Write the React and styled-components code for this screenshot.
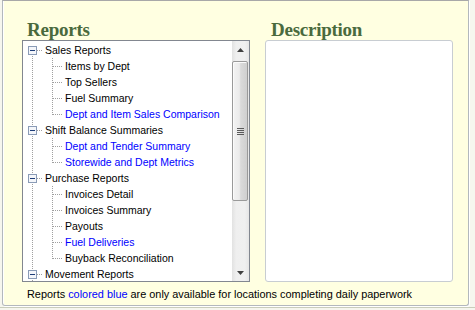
import React from "react";
import styled, { createGlobalStyle } from "styled-components";

const Global = createGlobalStyle`
  html, body { margin: 0; padding: 0; }
  body {
    width: 475px;
    height: 310px;
    background: #f6f6ee;
    overflow: hidden;
  }
`;

const Panel = styled.div`
  box-sizing: border-box;
  margin-left: 2px;
  width: 467px;
  height: 306px;
  background: #ffffe1;
  border: 1px solid #b3b8bd;
  border-top: 1px solid #a8a8a8;
  border-radius: 0 0 3px 3px;
  box-shadow: inset 1px 0 0 #ffffff, 1px 1px 0 #ffffff;
  padding: 18px 15px 0 19px;
  display: flex;
  flex-direction: column;
`;

const BottomRule = styled.div`
  margin-top: 1px;
  height: 1px;
  background: #c9cdbb;
`;

const Columns = styled.div`
  display: flex;
  gap: 15px;
`;

const Column = styled.div`
  width: ${(p) => p.$width}px;
  display: flex;
  flex-direction: column;
`;

const Heading = styled.h2`
  margin: 0;
  padding-left: ${(p) => p.$inset}px;
  font-family: "Liberation Serif", "Times New Roman", serif;
  font-weight: bold;
  font-size: 19px;
  line-height: 21px;
  letter-spacing: -0.25px;
  color: #4a6a3d;
`;

const TreeBox = styled.div`
  box-sizing: border-box;
  height: 242px;
  border: 1px solid #828790;
  background: #ffffff;
  display: flex;
  overflow: hidden;
`;

const TreeList = styled.div`
  flex: 1;
  padding-top: 1px;
  overflow: hidden;
`;

const Row = styled.div`
  display: flex;
  height: 16px;
  align-items: flex-start;
`;

const Cell = styled.svg`
  display: block;
  flex: 0 0 20px;
  width: 20px;
  height: 16px;
  shape-rendering: crispEdges;
`;

const Label = styled.span`
  box-sizing: border-box;
  height: 16px;
  padding-top: 1px;
  margin-left: 2px;
  line-height: 15px;
  white-space: nowrap;
  font-family: "Liberation Sans", Arial, sans-serif;
  font-size: 10.5px;
  color: ${(p) => (p.$blue ? "#0000ff" : "#000000")};
`;

const ScrollBar = styled.div`
  flex: 0 0 17px;
  width: 17px;
  display: flex;
  flex-direction: column;
  background: linear-gradient(to right, #e2e2e2, #efefef 25%, #f0f0f0 75%, #e6e6e6);
`;

const ScrollButton = styled.div`
  height: 17px;
  flex: 0 0 17px;
  display: flex;
  align-items: center;
  justify-content: center;
`;

const Track = styled.div`
  flex: 1;
  padding-top: 3px;
`;

const Thumb = styled.div`
  box-sizing: border-box;
  margin: 0 1px 0 0;
  height: 140px;
  border: 1px solid #9a9a9a;
  border-radius: 2px;
  background: linear-gradient(to right, #f3f3f3, #ebebeb 45%, #dadada 55%, #cfcfcf);
  box-shadow: inset 1px 1px 0 #fbfbfb;
  display: flex;
  align-items: center;
  justify-content: center;
`;

const DescBox = styled.div`
  box-sizing: border-box;
  height: 242px;
  border: 1px solid #c8cdd2;
  border-radius: 3px;
  background: #ffffff;
`;

const Footer = styled.p`
  margin: 4px 0 0;
  padding-left: 5px;
  font-family: "Liberation Sans", Arial, sans-serif;
  font-size: 10.9px;
  line-height: 16px;
  color: #000000;
  white-space: nowrap;
`;

const Blue = styled.span`
  color: #0000ff;
`;

const DOT = "#a0a0a0";

function VLine({ from, to }) {
  return (
    <line x1="9.5" y1={from} x2="9.5" y2={to} stroke={DOT} strokeWidth="1" strokeDasharray="1 1" />
  );
}

function HLine({ from }) {
  return (
    <line x1={from} y1="8.5" x2="20" y2="8.5" stroke={DOT} strokeWidth="1" strokeDasharray="1 1" />
  );
}

function ParentCell({ first }) {
  return (
    <Cell viewBox="0 0 20 16">
      {!first && <VLine from={0} to={4} />}
      <VLine from={14} to={16} />
      <HLine from={14} />
      <rect x="5.5" y="4.5" width="8" height="8" fill="#f4f6fa" stroke="#8a9bb6" />
      <line x1="7" y1="8.5" x2="12" y2="8.5" stroke="#1e3d78" strokeWidth="1" />
    </Cell>
  );
}

function PassCell() {
  return (
    <Cell viewBox="0 0 20 16">
      <VLine from={0} to={16} />
    </Cell>
  );
}

function ChildCell({ last }) {
  return (
    <Cell viewBox="0 0 20 16">
      <VLine from={0} to={last ? 9 : 16} />
      <HLine from={10} />
    </Cell>
  );
}

const tree = [
  {
    title: "Sales Reports",
    items: [
      { t: "Items by Dept" },
      { t: "Top Sellers" },
      { t: "Fuel Summary" },
      { t: "Dept and Item Sales Comparison", blue: true },
    ],
  },
  {
    title: "Shift Balance Summaries",
    items: [
      { t: "Dept and Tender Summary", blue: true },
      { t: "Storewide and Dept Metrics", blue: true },
    ],
  },
  {
    title: "Purchase Reports",
    items: [
      { t: "Invoices Detail" },
      { t: "Invoices Summary" },
      { t: "Payouts" },
      { t: "Fuel Deliveries", blue: true },
      { t: "Buyback Reconciliation" },
    ],
  },
  { title: "Movement Reports", items: [] },
];

function ArrowUp() {
  return (
    <svg width="7" height="4" viewBox="0 0 7 4">
      <polygon points="3.5,0 7,4 0,4" fill="#404040" />
    </svg>
  );
}

function ArrowDown() {
  return (
    <svg width="7" height="4" viewBox="0 0 7 4">
      <polygon points="0,0 7,0 3.5,4" fill="#404040" />
    </svg>
  );
}

function Grip() {
  return (
    <svg width="7" height="7" viewBox="0 0 7 7" shapeRendering="crispEdges">
      <line x1="0" y1="0.5" x2="7" y2="0.5" stroke="#5a5a5a" />
      <line x1="0" y1="2.5" x2="7" y2="2.5" stroke="#5a5a5a" />
      <line x1="0" y1="4.5" x2="7" y2="4.5" stroke="#5a5a5a" />
      <line x1="0" y1="6.5" x2="7" y2="6.5" stroke="#5a5a5a" />
    </svg>
  );
}

export default function App() {
  return (
    <>
      <Global />
      <Panel>
        <Columns>
          <Column $width={228}>
            <Heading $inset={5}>Reports</Heading>
            <TreeBox>
              <TreeList>
                {tree.map((group, gi) => (
                  <React.Fragment key={group.title}>
                    <Row>
                      <ParentCell first={gi === 0} />
                      <Label>{group.title}</Label>
                    </Row>
                    {group.items.map((item, ii) => (
                      <Row key={item.t}>
                        <PassCell />
                        <ChildCell last={ii === group.items.length - 1} />
                        <Label $blue={item.blue}>{item.t}</Label>
                      </Row>
                    ))}
                  </React.Fragment>
                ))}
              </TreeList>
              <ScrollBar>
                <ScrollButton>
                  <ArrowUp />
                </ScrollButton>
                <Track>
                  <Thumb>
                    <Grip />
                  </Thumb>
                </Track>
                <ScrollButton>
                  <ArrowDown />
                </ScrollButton>
              </ScrollBar>
            </TreeBox>
          </Column>
          <Column $width={188}>
            <Heading $inset={6}>Description</Heading>
            <DescBox />
          </Column>
        </Columns>
        <Footer>
          Reports <Blue>colored blue</Blue> are only available for locations completing daily paperwork
        </Footer>
      </Panel>
      <BottomRule />
    </>
  );
}
